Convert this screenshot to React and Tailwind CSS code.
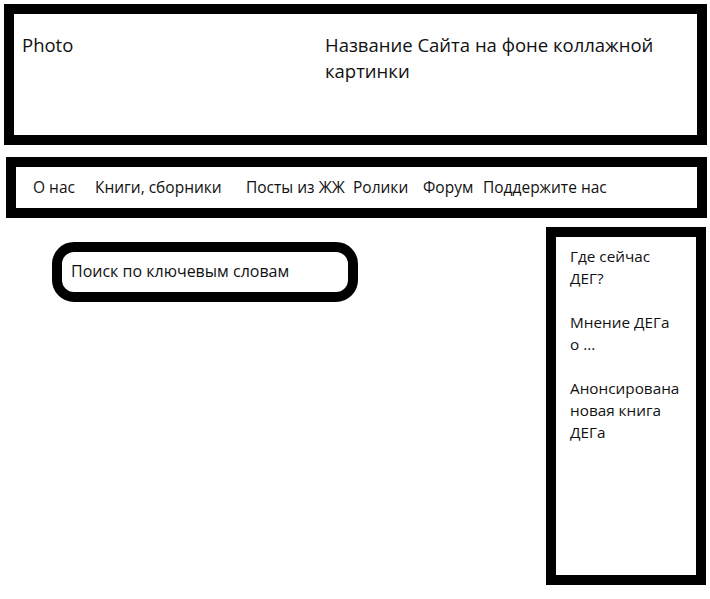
const NAV = [
  { label: 'О нас', w: 'w-[62px]' },
  { label: 'Книги, сборники', w: 'w-[151px]' },
  { label: 'Посты из ЖЖ', w: 'w-[107px]' },
  { label: 'Ролики', w: 'w-[70px]' },
  { label: 'Форум', w: 'w-[60px]' },
  { label: 'Поддержите нас', w: 'w-auto' },
];

// each entry is a list of lines, broken as in the mockup
const NEWS = [
  ['Где сейчас', 'ДЕГ?'],
  ['Мнение ДЕГа', 'о ...'],
  ['Анонсирована', 'новая книга', 'ДЕГа'],
];

export default function App() {
  return (
    <div className="min-h-screen bg-white text-[#111] font-['Open_Sans',sans-serif] pl-[4px] pt-[4px]">
      {/* Header: photo + site title */}
      <header className="w-[703px] h-[141px] border-[10px] border-black flex">
        <div className="w-[311px] pl-[8px] pt-[18px] text-[18.5px] leading-[26px]">Photo</div>
        <div className="flex-1 pt-[18px] pr-[20px] text-[18.5px] leading-[26px]">
          Название Сайта на фоне коллажной картинки
        </div>
      </header>

      <nav className="ml-[2px] mt-[12px] w-[701px] h-[61px] border-[10px] border-black flex items-center pl-[17px] text-[15.5px] whitespace-nowrap">
        {NAV.map((item) => (
          <span key={item.label} className={item.w}>{item.label}</span>
        ))}
      </nav>

      <div className="flex">
        <div className="flex-1 pl-[48px] pt-[24px]">
          <div className="w-[306px] h-[60px] border-[10px] border-black rounded-[22px] flex items-center pl-[9px] pb-[2px] text-[16px]">
            Поиск по ключевым словам
          </div>
        </div>
        <aside className="mt-[9px] mr-[4px] w-[160px] h-[358px] border-[10px] border-black pl-[14px] pt-[8px] text-[15.3px] leading-[22px] whitespace-nowrap">
          {NEWS.map((lines) => (
            <p key={lines.join(' ')} className="mb-[22px]">
              {lines.map((line) => (
                <span key={line} className="block">{line}</span>
              ))}
            </p>
          ))}
        </aside>
      </div>
    </div>
  );
}
